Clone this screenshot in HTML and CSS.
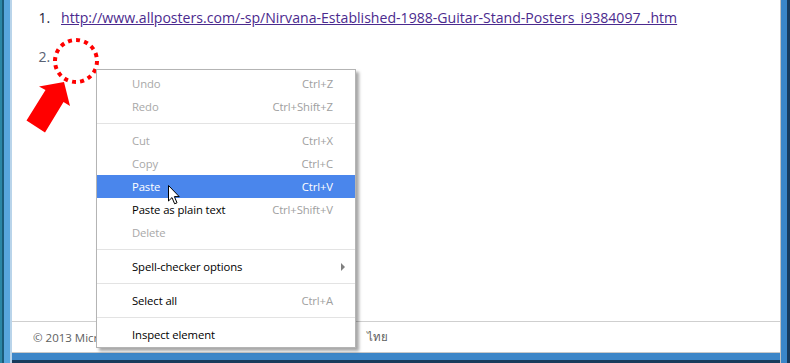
FILE: index.html
```html
<!DOCTYPE html>
<html>
<head>
    <link rel="stylesheet" href="styles.css">
</head>
<body>
    <div class="window">
        <div class="page">
            <div class="main">
                <ol class="list">
                    <li><a href="#">http://www.allposters.com/-sp/Nirvana-Established-1988-Guitar-Stand-Posters_i9384097_.htm</a></li>
                    <li class="empty"></li>
                </ol>
            </div>
            <div class="footer">
                <span class="copy">© 2013 Microsoft</span>
                <span class="lang">ไทย</span>
            </div>
        </div>
    </div>

    <!-- annotation drawn over the page -->
    <svg class="marks" width="120" height="140" viewBox="0 0 120 140">
        <circle cx="76" cy="61" r="21" fill="none" stroke="#ff0000" stroke-width="4" stroke-dasharray="4 4.2"/>
        <polygon points="64,82 70,106 63.5,102 45,132.5 26.5,120.5 45.5,90 39,86.5" fill="#ff0000"/>
    </svg>

    <div class="menu">
        <div class="item disabled"><span>Undo</span><span class="key">Ctrl+Z</span></div>
        <div class="item disabled"><span>Redo</span><span class="key">Ctrl+Shift+Z</span></div>
        <div class="sep"></div>
        <div class="item disabled"><span>Cut</span><span class="key">Ctrl+X</span></div>
        <div class="item disabled"><span>Copy</span><span class="key">Ctrl+C</span></div>
        <div class="item active"><span>Paste</span><span class="key">Ctrl+V</span></div>
        <div class="item"><span>Paste as plain text</span><span class="key">Ctrl+Shift+V</span></div>
        <div class="item disabled"><span>Delete</span></div>
        <div class="sep"></div>
        <div class="item"><span>Spell-checker options</span><span class="sub"></span></div>
        <div class="sep"></div>
        <div class="item"><span>Select all</span><span class="key">Ctrl+A</span></div>
        <div class="sep"></div>
        <div class="item"><span>Inspect element</span></div>
    </div>

    <svg class="cursor" width="14" height="22" viewBox="0 0 14 22">
        <path d="M1.5,1.5 L1.5,17 L5,13.6 L7.6,19.8 L10,18.8 L7.4,12.6 L12.2,12.6 Z" fill="#fff" stroke="#000" stroke-width="1" stroke-linejoin="miter"/>
    </svg>
</body>
</html>
```

FILE: styles.css
```css
body {
    margin: 0;
    width: 790px;
    height: 363px;
    overflow: hidden;
    background-color: #fff;
    position: relative;
}

.window {
    height: 363px;
    box-sizing: border-box;
    padding: 0 10px 11px 12px;
    background-color: #3a84c8;
    background-image:
        linear-gradient(to right, #2b87a6 0 2px, #1b5c7a 2px 4px, #58a6de 4px 10px, #b9d4ea 10px 12px),
        linear-gradient(to right, #c4c4c4 0 1px, #3a86c9 1px 7px, #163a5e 7px 10px),
        linear-gradient(to bottom, #c9c9c9 0 1px, #3c86c8 1px 8px, #183b5c 8px 11px);
    background-size: 12px 100%, 10px 100%, 100% 11px;
    background-position: left top, right top, left bottom;
    background-repeat: no-repeat;
}

.page {
    height: 100%;
    background-color: #fff;
    display: flex;
    flex-direction: column;
    font-family: "Open Sans", "Noto Sans", sans-serif;
}

.main {
    flex: 1;
}

.list {
    margin: 0;
    padding: 8px 0 0 42px;
    font-size: 14.1px;
    line-height: 20px;
    color: #1c1c3c;
}

.list li {
    margin-bottom: 19px;
    padding-left: 7px;
}

.list a {
    color: #4b2a8e;
    text-decoration: underline;
}

.list li.empty::marker {
    color: #5a6274;
}

.footer {
    height: 30px;
    border-top: 1px solid #cfcfcf;
    display: flex;
    align-items: center;
    padding-left: 21px;
    font-size: 11.5px;
    color: #5e5e5e;
}

.copy {
    width: 334px;
    white-space: nowrap;
    overflow: hidden;
}

.lang {
    font-family: "Noto Sans", "DejaVu Sans", sans-serif;
}

.marks {
    position: absolute;
    left: 0;
    top: 0;
}

.menu {
    position: absolute;
    left: 96px;
    top: 69px;
    width: 258px;
    padding: 2px 0 1px;
    background-color: #fff;
    border: 1px solid #b4b4b4;
    box-shadow: 3px 3px 3px rgba(0, 0, 0, 0.35);
    font-family: "Open Sans", "Noto Sans", sans-serif;
    font-size: 11.3px;
    color: #000;
}

.item {
    height: 23px;
    display: flex;
    align-items: center;
    justify-content: space-between;
    padding: 0 22px 0 35px;
    letter-spacing: -0.1px;
}

.item .key {
    color: #a0a0a0;
}

.item.disabled {
    color: #a8a8a8;
}

.item.active {
    background-color: #4a86ec;
    color: #fff;
}

.item.active .key {
    color: #fff;
}

.sep {
    height: 1px;
    background-color: #e3e3e3;
    margin: 5px 0;
}

.sub {
    width: 0;
    height: 0;
    border-left: 4px solid #808080;
    border-top: 4px solid transparent;
    border-bottom: 4px solid transparent;
    margin-right: -12px;
}

.cursor {
    position: absolute;
    left: 167px;
    top: 184px;
}
```
